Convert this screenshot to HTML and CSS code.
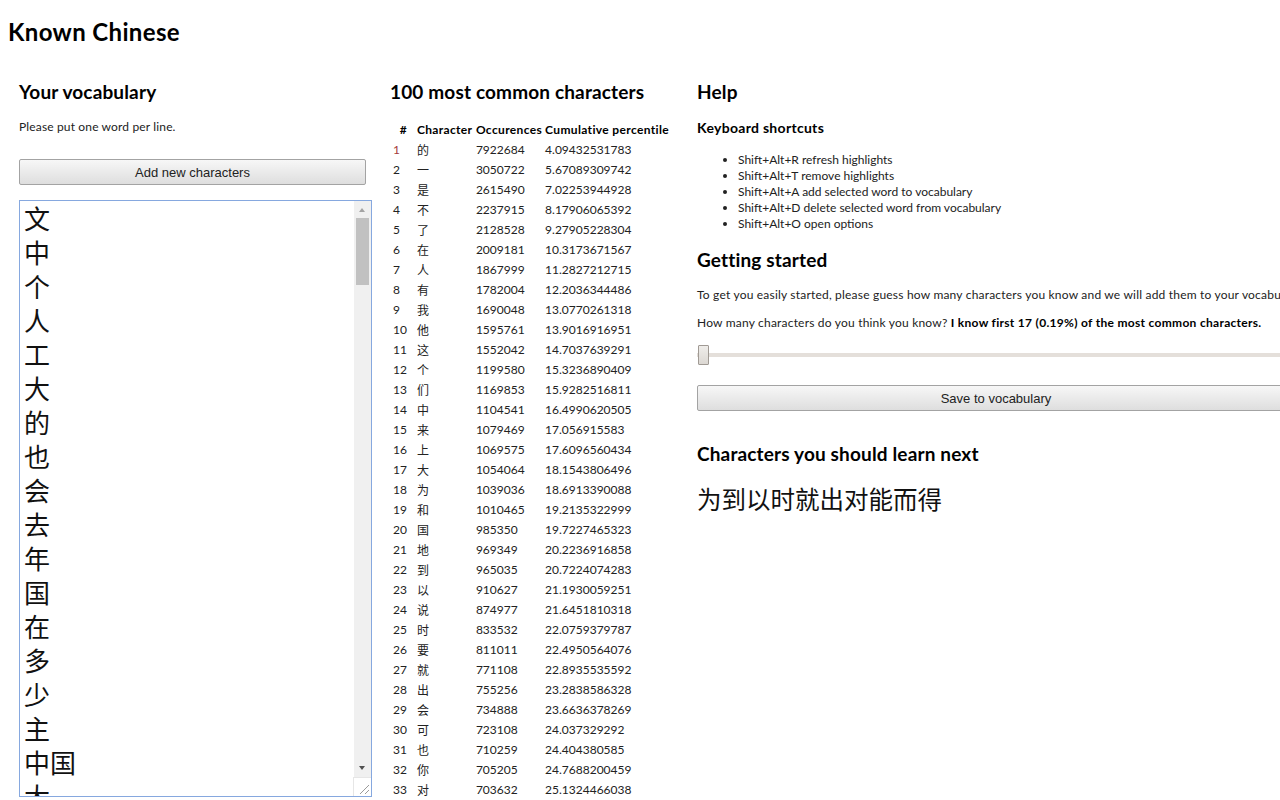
FILE: index.html
```html
<!DOCTYPE html>
<html lang="en">
<head>
<meta charset="utf-8">
<title>Known Chinese</title>
<link rel="stylesheet" href="styles.css">
</head>
<body>
<h1 class="title">Known Chinese</h1>
<div class="columns">
  <section class="col col-vocab">
    <h2 class="heading">Your vocabulary</h2>
    <p class="note">Please put one word per line.</p>
    <button class="btn btn-add">Add new characters</button>
    <div class="vocab-wrap">
      <textarea class="vocab" spellcheck="false">文
中
个
人
工
大
的
也
会
去
年
国
在
多
少
主
中国
大
学
生
</textarea>
      <div class="sb" aria-hidden="true">
        <div class="sb-up"></div>
        <div class="sb-track"><div class="sb-thumb"></div></div>
        <div class="sb-down"></div>
        <div class="sb-corner"><div class="grip"></div></div>
      </div>
    </div>
  </section>
  <section class="col col-table">
    <h2 class="heading">100 most common characters</h2>
    <table class="freq">
      <colgroup><col class="c1"><col class="c2"><col class="c3"><col class="c4"></colgroup>
      <thead>
        <tr><th class="hash">#</th><th>Character</th><th>Occurences</th><th>Cumulative percentile</th></tr>
      </thead>
      <tbody>
        <tr><td class="known">1</td><td>的</td><td>7922684</td><td>4.09432531783</td></tr>
        <tr><td>2</td><td>一</td><td>3050722</td><td>5.67089309742</td></tr>
        <tr><td>3</td><td>是</td><td>2615490</td><td>7.02253944928</td></tr>
        <tr><td>4</td><td>不</td><td>2237915</td><td>8.17906065392</td></tr>
        <tr><td>5</td><td>了</td><td>2128528</td><td>9.27905228304</td></tr>
        <tr><td>6</td><td>在</td><td>2009181</td><td>10.3173671567</td></tr>
        <tr><td>7</td><td>人</td><td>1867999</td><td>11.2827212715</td></tr>
        <tr><td>8</td><td>有</td><td>1782004</td><td>12.2036344486</td></tr>
        <tr><td>9</td><td>我</td><td>1690048</td><td>13.0770261318</td></tr>
        <tr><td>10</td><td>他</td><td>1595761</td><td>13.9016916951</td></tr>
        <tr><td>11</td><td>这</td><td>1552042</td><td>14.7037639291</td></tr>
        <tr><td>12</td><td>个</td><td>1199580</td><td>15.3236890409</td></tr>
        <tr><td>13</td><td>们</td><td>1169853</td><td>15.9282516811</td></tr>
        <tr><td>14</td><td>中</td><td>1104541</td><td>16.4990620505</td></tr>
        <tr><td>15</td><td>来</td><td>1079469</td><td>17.056915583</td></tr>
        <tr><td>16</td><td>上</td><td>1069575</td><td>17.6096560434</td></tr>
        <tr><td>17</td><td>大</td><td>1054064</td><td>18.1543806496</td></tr>
        <tr><td>18</td><td>为</td><td>1039036</td><td>18.6913390088</td></tr>
        <tr><td>19</td><td>和</td><td>1010465</td><td>19.2135322999</td></tr>
        <tr><td>20</td><td>国</td><td>985350</td><td>19.7227465323</td></tr>
        <tr><td>21</td><td>地</td><td>969349</td><td>20.2236916858</td></tr>
        <tr><td>22</td><td>到</td><td>965035</td><td>20.7224074283</td></tr>
        <tr><td>23</td><td>以</td><td>910627</td><td>21.1930059251</td></tr>
        <tr><td>24</td><td>说</td><td>874977</td><td>21.6451810318</td></tr>
        <tr><td>25</td><td>时</td><td>833532</td><td>22.0759379787</td></tr>
        <tr><td>26</td><td>要</td><td>811011</td><td>22.4950564076</td></tr>
        <tr><td>27</td><td>就</td><td>771108</td><td>22.8935535592</td></tr>
        <tr><td>28</td><td>出</td><td>755256</td><td>23.2838586328</td></tr>
        <tr><td>29</td><td>会</td><td>734888</td><td>23.6636378269</td></tr>
        <tr><td>30</td><td>可</td><td>723108</td><td>24.037329292</td></tr>
        <tr><td>31</td><td>也</td><td>710259</td><td>24.404380585</td></tr>
        <tr><td>32</td><td>你</td><td>705205</td><td>24.7688200459</td></tr>
        <tr><td>33</td><td>对</td><td>703632</td><td>25.1324466038</td></tr>
      </tbody>
    </table>
  </section>
  <section class="col col-help">
    <h2 class="heading">Help</h2>
    <h3 class="subheading">Keyboard shortcuts</h3>
    <ul class="shortcuts">
      <li>Shift+Alt+R refresh highlights</li>
      <li>Shift+Alt+T remove highlights</li>
      <li>Shift+Alt+A add selected word to vocabulary</li>
      <li>Shift+Alt+D delete selected word from vocabulary</li>
      <li>Shift+Alt+O open options</li>
    </ul>
    <h2 class="heading heading-gs">Getting started</h2>
    <p class="text text-intro">To get you easily started, please guess how many characters you know and we will add them to your vocabulary.</p>
    <p class="text text-q">How many characters do you think you know? <b>I know first 17 (0.19%) of the most common characters.</b></p>
    <input class="slider" type="range" min="0" max="9000" value="17">
    <button class="btn btn-save">Save to vocabulary</button>
    <h2 class="heading heading-next">Characters you should learn next</h2>
    <div class="next-chars">为到以时就出对能而得</div>
  </section>
</div>
</body>
</html>
```
FILE: styles.css
```css
html, body {
  overflow: hidden;
}
body {
  margin: 0;
  padding: 0 0 0 8px;
  font-family: Lato, "Noto Sans CJK SC", sans-serif;
  color: #111;
  background: #fff;
  width: 1400px;
}
.title {
  margin: 16px 0 0;
  font-size: 24px;
  line-height: 32px;
  font-weight: 700;
  letter-spacing: 0.35px;
  color: #000;
}
.columns {
  display: flex;
  margin-top: 32px;
  align-items: flex-start;
}
.col-vocab {
  width: 353px;
  margin-left: 11px;
}
.col-table {
  width: 289px;
  margin-left: 18px;
}
.col-help {
  width: 600px;
  margin-left: 18px;
}
.heading {
  margin: 0;
  font-size: 19px;
  line-height: 24px;
  font-weight: 700;
  letter-spacing: 0.15px;
  color: #000;
}
.note {
  margin: 15px 0 0 0;
  font-size: 12px;
  line-height: 16px;
  letter-spacing: 0.15px;
  color: #222;
}
.btn {
  display: block;
  height: 26px;
  padding: 0;
  font-family: "Liberation Sans", Arial, sans-serif;
  font-size: 13px;
  color: #222;
  background: linear-gradient(#f7f7f7, #dedede);
  border: 1px solid #a3a3a3;
  border-radius: 2px;
}
.btn-add {
  width: 347px;
  margin-top: 24px;
}
.vocab-wrap {
  position: relative;
  width: 353px;
  height: 597px;
  margin-top: 15px;
}
.vocab {
  display: block;
  box-sizing: border-box;
  width: 100%;
  height: 100%;
  margin: 0;
  padding: 0 22px 0 4px;
  border: 1px solid #86a8df;
  outline: none;
  resize: none;
  font-family: "Noto Sans CJK SC", sans-serif;
  font-size: 26px;
  line-height: 34px;
  color: #111;
  overflow: hidden;
}
.sb {
  position: absolute;
  top: 1px;
  right: 1px;
  bottom: 1px;
  width: 17px;
  display: flex;
  flex-direction: column;
  background: #f0f0f0;
}
.sb-up, .sb-down {
  height: 17px;
  flex: none;
  position: relative;
}
.sb-up::after {
  content: "";
  position: absolute;
  left: 5px;
  top: 7px;
  border-left: 3.5px solid transparent;
  border-right: 3.5px solid transparent;
  border-bottom: 4px solid #a3a3a3;
}
.sb-down::after {
  content: "";
  position: absolute;
  left: 5px;
  top: 6px;
  border-left: 3.5px solid transparent;
  border-right: 3.5px solid transparent;
  border-top: 4px solid #505050;
}
.sb-track {
  flex: 1;
  padding: 0 2px;
}
.sb-thumb {
  height: 67px;
  background: #c1c1c1;
}
.sb-corner {
  height: 18px;
  flex: none;
  background: #fff;
  border-top: 1px solid #e6e6e6;
  border-left: 1px solid #e6e6e6;
  margin-left: -1px;
  position: relative;
}
.grip {
  position: absolute;
  right: 2px;
  bottom: 2px;
  width: 9px;
  height: 9px;
  background: linear-gradient(135deg, transparent 46%, #9a9a9a 46%, #9a9a9a 54%, transparent 54%, transparent 74%, #9a9a9a 74%, #9a9a9a 82%, transparent 82%);
}
.freq {
  margin-top: 16px;
  border-collapse: collapse;
  table-layout: fixed;
  font-size: 12px;
  color: #222;
}
.freq .c1 { width: 24px; }
.freq .c2 { width: 59px; }
.freq .c3 { width: 69px; }
.freq .c4 { width: 137px; }
.freq th {
  height: 19px;
  padding: 0 0 0 3px;
  text-align: left;
  font-weight: 700;
  letter-spacing: 0.35px;
  color: #000;
  white-space: nowrap;
}
.freq th.hash {
  text-align: center;
}
.freq td {
  height: 20px;
  padding: 0 0 0 3px;
  white-space: nowrap;
}
.freq td.known {
  color: #a33a3a;
}
.subheading {
  margin: 15px 0 0;
  font-size: 14px;
  line-height: 18px;
  font-weight: 700;
  letter-spacing: 0.3px;
  color: #000;
}
.shortcuts {
  margin: 15px 0 0;
  padding-left: 41px;
  font-size: 12px;
  line-height: 16px;
  color: #222;
}
.heading-gs {
  margin-top: 16px;
}
.text {
  margin: 0;
  font-size: 12px;
  line-height: 16px;
  letter-spacing: 0.2px;
  color: #222;
  white-space: nowrap;
}
.text-intro {
  margin-top: 15px;
}
.text-q {
  margin-top: 12px;
}
.text-q b {
  color: #000;
  letter-spacing: 0.3px;
}
.slider {
  display: block;
  -webkit-appearance: none;
  appearance: none;
  width: 600px;
  height: 20px;
  margin: 14px 0 0;
  background: transparent;
}
.slider::-webkit-slider-runnable-track {
  height: 4px;
  background: #e4dfda;
}
.slider::-webkit-slider-thumb {
  -webkit-appearance: none;
  width: 11px;
  height: 20px;
  margin-top: -8px;
  box-sizing: border-box;
  border: 1px solid #a09a94;
  border-radius: 1px;
  background: linear-gradient(#efedea, #dcd8d3);
}
.btn-save {
  width: 598px;
  margin-top: 20px;
}
.heading-next {
  margin-top: 31px;
}
.next-chars {
  margin-top: 17px;
  font-family: "Noto Sans CJK SC", sans-serif;
  font-size: 24.5px;
  line-height: 32px;
  color: #111;
}
```
